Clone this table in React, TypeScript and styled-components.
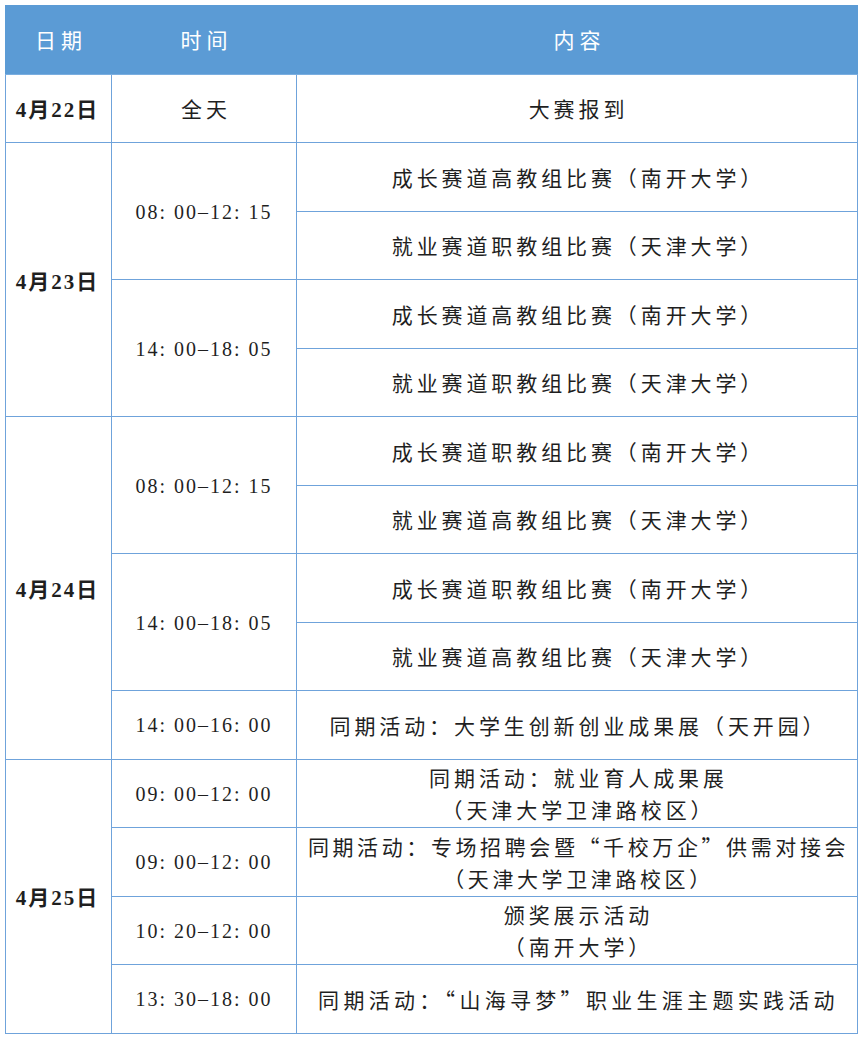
import React from "react";
import styled, { createGlobalStyle } from "styled-components";

const Global = createGlobalStyle`
  html, body { margin: 0; padding: 0; background: #ffffff; }
  body { font-family: "Liberation Serif", "Noto Sans CJK SC", serif; }
`;

const Page = styled.div`
  padding: 5px 0 0 5px;
`;

const Table = styled.table`
  width: 852px;
  border-collapse: collapse;
  table-layout: fixed;
  border: 1px solid #6fa3db;
  color: #1f1f1f;
`;

const Row = styled.tr`
  height: 68.5px;
`;

const HeadCell = styled.th`
  background: #5b9bd5;
  color: #ffffff;
  font-family: "Noto Sans CJK SC", sans-serif;
  font-weight: 400;
  font-size: 21px;
  letter-spacing: 5px;
  text-align: center;
  padding: 0 0 1px 5px;
  border: 1px solid #5b9bd5;
  border-bottom-color: #7aaee0;
`;

const Cell = styled.td`
  border: 1px solid #6fa3db;
  text-align: center;
  vertical-align: middle;
  padding: 0;
`;

const DateCell = styled(Cell)`
  font-family: "Liberation Serif", "Noto Sans CJK SC", serif;
  font-weight: 700;
  font-size: 21px;
  letter-spacing: 2px;
  padding-right: 2px;
`;

const TimeCell = styled(Cell)`
  font-family: "Liberation Serif", "Noto Sans CJK SC", serif;
  font-size: 20px;
  letter-spacing: 2px;
  padding-top: 2px;
`;

const WordCell = styled(Cell)`
  font-family: "Noto Sans CJK SC", sans-serif;
  font-weight: 400;
  font-size: 21px;
  letter-spacing: 4px;
  padding-left: 4px;
`;

const ContentCell = styled.td<{ $spacing?: number }>`
  border: 1px solid #6fa3db;
  text-align: center;
  vertical-align: middle;
  padding: 0 0 0 3px;
  font-family: "Noto Sans CJK SC", sans-serif;
  font-weight: 400;
  font-size: 21px;
  line-height: 32px;
  letter-spacing: ${(p) => p.$spacing ?? 3.9}px;
  white-space: nowrap;
`;

type Item = { time?: string; span?: number; text: React.ReactNode; spacing?: number };

const t0812 = "08: 00–12: 15";
const t1418 = "14: 00–18: 05";

const day23: Item[] = [
  { time: t0812, span: 2, text: "成长赛道高教组比赛（南开大学）" },
  { text: "就业赛道职教组比赛（天津大学）" },
  { time: t1418, span: 2, text: "成长赛道高教组比赛（南开大学）" },
  { text: "就业赛道职教组比赛（天津大学）" },
];

const day24: Item[] = [
  { time: t0812, span: 2, text: "成长赛道职教组比赛（南开大学）" },
  { text: "就业赛道高教组比赛（天津大学）" },
  { time: t1418, span: 2, text: "成长赛道职教组比赛（南开大学）" },
  { text: "就业赛道高教组比赛（天津大学）" },
  { time: "14: 00–16: 00", text: "同期活动：大学生创新创业成果展（天开园）" },
];

const day25: Item[] = [
  {
    time: "09: 00–12: 00",
    text: (
      <>
        同期活动：就业育人成果展
        <br />
        （天津大学卫津路校区）
      </>
    ),
  },
  {
    time: "09: 00–12: 00",
    spacing: 3.6,
    text: (
      <>
        同期活动：专场招聘会暨“千校万企”供需对接会
        <br />
        （天津大学卫津路校区）
      </>
    ),
  },
  {
    time: "10: 20–12: 00",
    text: (
      <>
        颁奖展示活动
        <br />
        （南开大学）
      </>
    ),
  },
  { time: "13: 30–18: 00", text: "同期活动：“山海寻梦”职业生涯主题实践活动", spacing: 4.3 },
];

function DayRows({ date, items }: { date: string; items: Item[] }) {
  return (
    <>
      {items.map((it, i) => (
        <Row key={i}>
          {i === 0 && <DateCell rowSpan={items.length}>{date}</DateCell>}
          {it.time && <TimeCell rowSpan={it.span ?? 1}>{it.time}</TimeCell>}
          <ContentCell $spacing={it.spacing}>{it.text}</ContentCell>
        </Row>
      ))}
    </>
  );
}

export default function App() {
  return (
    <Page lang="zh-CN">
      <Global />
      <Table>
        <colgroup>
          <col style={{ width: 106 }} />
          <col style={{ width: 185 }} />
          <col style={{ width: 561 }} />
        </colgroup>
        <thead>
          <Row>
            <HeadCell>日期</HeadCell>
            <HeadCell>时间</HeadCell>
            <HeadCell>内容</HeadCell>
          </Row>
        </thead>
        <tbody>
          <Row>
            <DateCell>4月22日</DateCell>
            <WordCell>全天</WordCell>
            <ContentCell>大赛报到</ContentCell>
          </Row>
          <DayRows date="4月23日" items={day23} />
          <DayRows date="4月24日" items={day24} />
          <DayRows date="4月25日" items={day25} />
        </tbody>
      </Table>
    </Page>
  );
}
